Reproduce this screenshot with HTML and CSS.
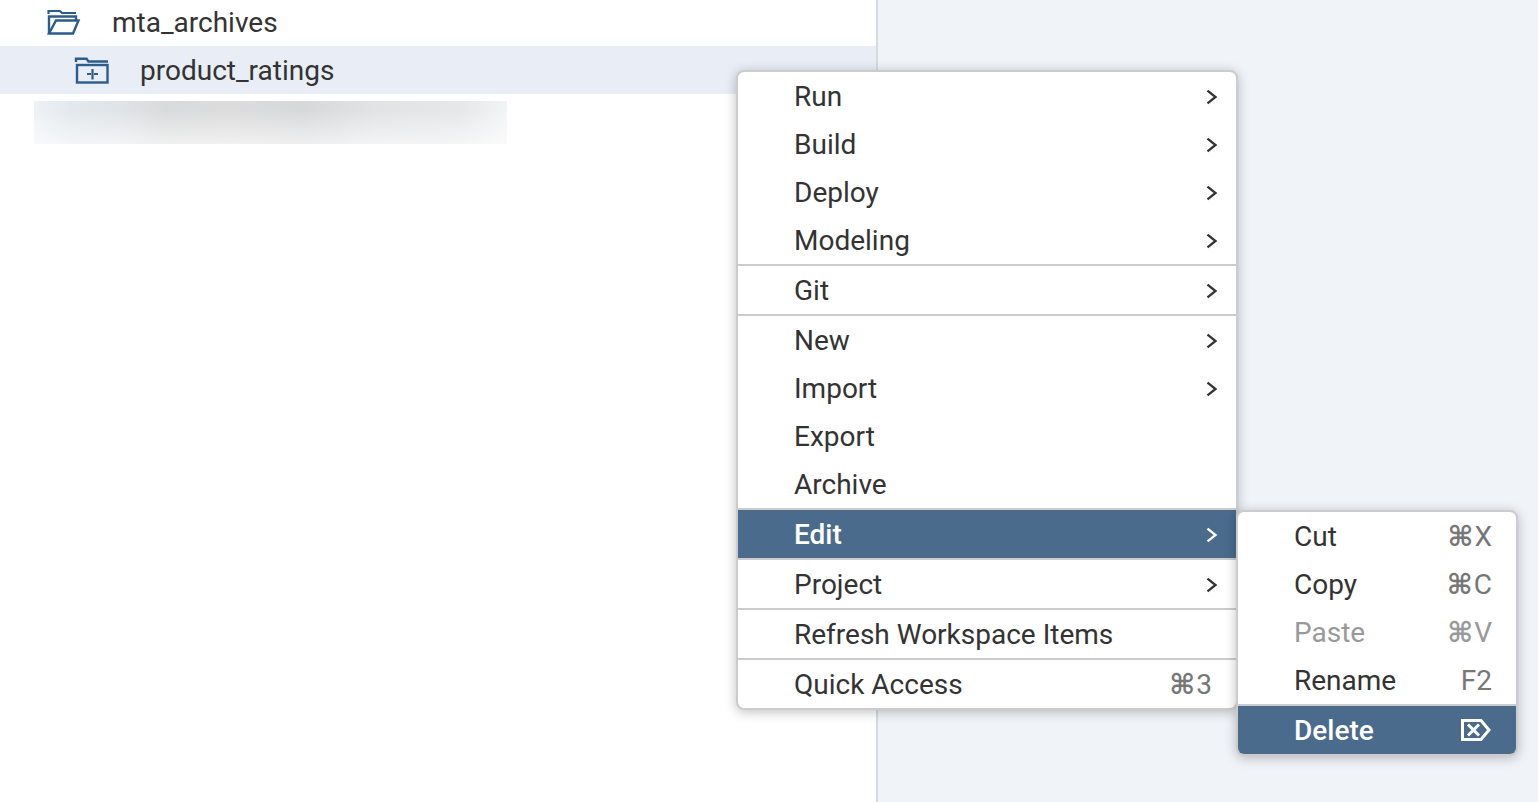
FILE: index.html
```html
<!DOCTYPE html>
<html lang="en">
<head>
<meta charset="utf-8">
<title>Workspace</title>
<link rel="stylesheet" href="styles.css">
</head>
<body>
<svg class="defs" aria-hidden="true">
  <symbol id="chevron" viewBox="0 0 12 16"><path d="M1.500 1.700 L9.500 8 L1.500 14.300" fill="none" stroke="currentColor" stroke-width="2.300"/></symbol>
</svg>
<main class="ide">
  <nav class="tree" aria-label="Workspace files">
    <button class="node node-root" type="button">
      <svg class="node-icon" viewBox="0 0 34 28" aria-hidden="true"><g fill="none" stroke="currentColor" stroke-width="2.400"><path d="M2.500 5 V2 H14 L16 4 H30" stroke-width="2.200"/><path d="M3 25 V7.500 H30 V12"/><path d="M3 24.500 L10 11.500 H32.500 L27 24.500 Z"/></g></svg>
      <span>mta_archives</span>
    </button>
    <button class="node node-child" type="button">
      <svg class="node-icon" viewBox="0 0 34 28" aria-hidden="true"><g fill="none" stroke="currentColor" stroke-width="2.400"><path d="M2 5 V1.800 H12.500 L14.500 4.500 H34"/><rect x="3" y="8" width="30.500" height="17.500"/><path d="M13 17 H17 M20 17 H24 M18.500 12 V22.500" stroke-width="2.200"/></g></svg>
      <span>product_ratings</span>
    </button>
    <div class="redacted"></div>
  </nav>
  <section class="editor" aria-label="Editor"></section>

  <ul class="menu context">
    <li><button class="item" type="button">Run<svg class="chev"><use href="#chevron"/></svg></button></li>
    <li><button class="item" type="button">Build<svg class="chev"><use href="#chevron"/></svg></button></li>
    <li><button class="item" type="button">Deploy<svg class="chev"><use href="#chevron"/></svg></button></li>
    <li><button class="item" type="button">Modeling<svg class="chev"><use href="#chevron"/></svg></button></li>
    <li class="group"><button class="item" type="button">Git<svg class="chev"><use href="#chevron"/></svg></button></li>
    <li class="group"><button class="item" type="button">New<svg class="chev"><use href="#chevron"/></svg></button></li>
    <li><button class="item" type="button">Import<svg class="chev"><use href="#chevron"/></svg></button></li>
    <li><button class="item" type="button">Export</button></li>
    <li><button class="item" type="button">Archive</button></li>
    <li class="group has-submenu">
      <button class="item active" type="button">Edit<svg class="chev"><use href="#chevron"/></svg></button>
      <ul class="menu submenu">
        <li><button class="item" type="button">Cut<span class="key"><span class="cmd">⌘</span>X</span></button></li>
        <li><button class="item" type="button">Copy<span class="key"><span class="cmd">⌘</span>C</span></button></li>
        <li><button class="item" type="button" disabled>Paste<span class="key"><span class="cmd">⌘</span>V</span></button></li>
        <li><button class="item" type="button">Rename<span class="key">F2</span></button></li>
        <li class="group"><button class="item active" type="button">Delete<svg class="del" viewBox="0 0 32 24" aria-hidden="true"><g fill="none" stroke="currentColor" stroke-width="3"><path d="M2.500 1.500 H21 L29 11 L21 20.500 H2.500 Z"/><path d="M8 5.500 L19 16.500 M19 5.500 L8 16.500"/></g></svg></button></li>
      </ul>
    </li>
    <li class="group"><button class="item" type="button">Project<svg class="chev"><use href="#chevron"/></svg></button></li>
    <li class="group"><button class="item" type="button">Refresh Workspace Items</button></li>
    <li class="group"><button class="item" type="button">Quick Access<span class="key"><span class="cmd">⌘</span>3</span></button></li>
  </ul>
</main>
</body>
</html>
```
FILE: styles.css
```css
* { box-sizing: border-box; }

body {
  margin: 0;
  color: #333;
  font: 28px/46px Roboto, "Noto Sans", sans-serif;
}

button {
  display: flex;
  align-items: center;
  width: 100%;
  border: 0;
  background: none;
  color: inherit;
  font: inherit;
  text-align: left;
}

.defs { position: absolute; width: 0; height: 0; }

.ide { position: relative; display: flex; min-height: 100vh; }

.tree { flex: 0 0 56.95%; background: #fff; }

.editor { flex: 1; border-left: 2px solid #d6dade; background: #f0f3f8; }

.node { gap: 32px; height: 48px; padding: 2px 0 0; }
.node-root { height: 46px; padding: 0 0 0 46px; }
.node-child { padding-left: 74px; background: #e9edf5; }
.node-icon { width: 34px; height: 28px; color: #2b5c8c; overflow: visible; }

.redacted {
  width: 54%;
  height: 43px;
  margin: 7px 0 0 34px;
  background:
    linear-gradient(to bottom, rgba(255, 255, 255, 0) 20%, rgba(255, 255, 255, 0.6)),
    linear-gradient(to right, #eef2f5, #e2e8ed 8%, #e0e4e7 18%, #d9dadb 28%, #dcdcdd 42%, #d7d8da 57%, #e2e3e5 72%, #e6e7e9 90%, #f3f4f5);
}

.menu {
  position: absolute;
  margin: 0;
  padding: 0;
  border: 2px solid #ccc;
  border-radius: 8px;
  background: #fff;
  box-shadow: 0 2px 12px rgba(0, 0, 0, 0.25);
  list-style: none;
}

.context { top: 70px; left: 736px; width: 502px; }
.submenu { top: 0; left: 100%; width: 282px; }

.group { border-top: 2px solid #ccc; }
.has-submenu { position: relative; }

.item { justify-content: space-between; height: 48px; padding: 2px 24px 0 56px; }
.item:disabled { color: #999; }
.active { background: #4a6b8c; color: #fff; font-weight: 500; }
.submenu .active { border-radius: 0 0 6px 6px; }

.chev { width: 12px; height: 16px; margin-right: -6px; }
.key { display: flex; align-items: center; gap: 1px; color: #777; }
.item:disabled .key { color: #999; }
.cmd { font: bold 28px/46px "DejaVu Sans", sans-serif; }
.del { width: 32px; height: 24px; }
```
